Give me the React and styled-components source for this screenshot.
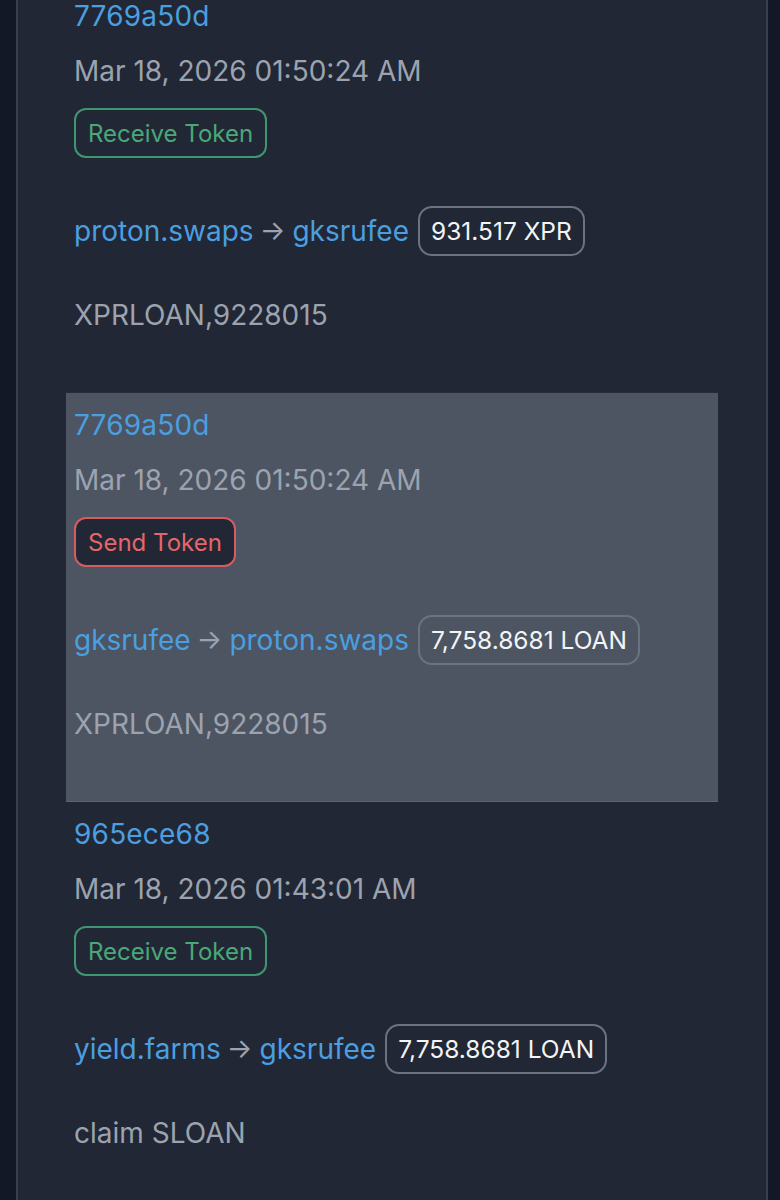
import React from "react";
import styled, { createGlobalStyle } from "styled-components";

const Global = createGlobalStyle`
  html, body { margin: 0; padding: 0; background: #121826; }
  body { font-family: Inter, "Noto Sans", sans-serif; -webkit-font-smoothing: antialiased; }
`;

const Page = styled.div`
  min-height: 1200px;
  padding: 0 12px 0 16px;
  background: #121826;
  overflow: hidden;
`;

const Panel = styled.div`
  min-height: 1240px;
  background: #212735;
  border-left: 2px solid #373e4c;
  border-right: 2px solid #373e4c;
  padding: 0 48px;
`;

const List = styled.div`
  display: flex;
  flex-direction: column;
  margin-top: -16px;
`;

const Row = styled.div`
  display: flex;
  flex-direction: column;
  align-items: flex-start;
  height: 409px;
  box-sizing: border-box;
  padding: 14px 8px 0;
  background: ${(p) => (p.$active ? "#4d5563" : "transparent")};
  border-bottom: 1px solid ${(p) => (p.$active ? "#5c6472" : "#262c3a")};
`;

const Hash = styled.a`
  font-size: 28px;
  line-height: 36px;
  color: #4b9fe0;
  text-decoration: none;
  letter-spacing: 0.2px;
`;

const DateText = styled.div`
  margin-top: 19px;
  font-size: 28px;
  line-height: 36px;
  color: #9ca3af;
`;

const Badge = styled.span`
  margin-top: 19px;
  display: inline-flex;
  align-items: center;
  height: 50px;
  box-sizing: border-box;
  padding: 0 12px;
  border-radius: 12px;
  font-size: 24px;
  border: 2px solid ${(p) => (p.$kind === "send" ? "#d65c5f" : "#3f9670")};
  color: ${(p) => (p.$kind === "send" ? "#e56668" : "#4aa878")};
  background: #212735;
`;

const Transfer = styled.div`
  margin-top: 48px;
  display: flex;
  align-items: center;
  font-size: 28px;
  line-height: 36px;
`;

const Account = styled.a`
  color: #4b9fe0;
  text-decoration: none;
`;

const Arrow = styled.span`
  color: #9ca3af;
  margin: 0 7px 0 6px;
  font-size: 27px;
`;

const Amount = styled.span`
  margin-left: 9px;
  display: inline-flex;
  align-items: center;
  height: 50px;
  box-sizing: border-box;
  padding: 0 11px;
  border: 2px solid #6b7280;
  border-radius: 14px;
  color: #f3f4f6;
  font-size: 24.5px;
`;

const Memo = styled.div`
  margin-top: 41px;
  font-size: 28px;
  line-height: 36px;
  color: #9ca3af;
`;

const rows = [
  {
    hash: "7769a50d",
    date: "Mar 18, 2026 01:50:24 AM",
    kind: "receive",
    from: "proton.swaps",
    to: "gksrufee",
    amount: "931.517 XPR",
    memo: "XPRLOAN,9228015",
  },
  {
    hash: "7769a50d",
    date: "Mar 18, 2026 01:50:24 AM",
    kind: "send",
    from: "gksrufee",
    to: "proton.swaps",
    amount: "7,758.8681 LOAN",
    memo: "XPRLOAN,9228015",
    active: true,
  },
  {
    hash: "965ece68",
    date: "Mar 18, 2026 01:43:01 AM",
    kind: "receive",
    from: "yield.farms",
    to: "gksrufee",
    amount: "7,758.8681 LOAN",
    memo: "claim SLOAN",
  },
];

export default function App() {
  return (
    <>
      <Global />
      <Page>
        <Panel>
          <List>
            {rows.map((r, i) => (
              <Row key={i} $active={r.active}>
                <Hash href="#">{r.hash}</Hash>
                <DateText>{r.date}</DateText>
                <Badge $kind={r.kind}>{r.kind === "send" ? "Send Token" : "Receive Token"}</Badge>
                <Transfer>
                  <Account href="#">{r.from}</Account>
                  <Arrow>→</Arrow>
                  <Account href="#">{r.to}</Account>
                  <Amount>{r.amount}</Amount>
                </Transfer>
                <Memo>{r.memo}</Memo>
              </Row>
            ))}
          </List>
        </Panel>
      </Page>
    </>
  );
}
